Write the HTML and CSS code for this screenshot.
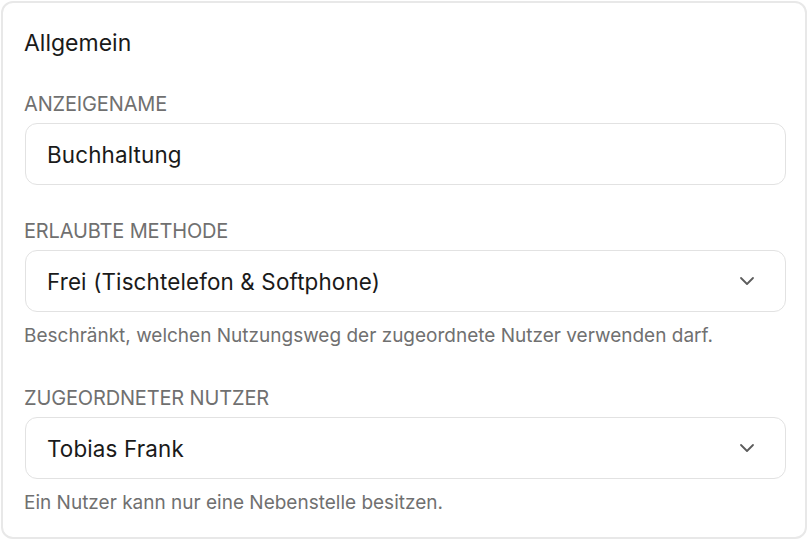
FILE: index.html
```html
<!DOCTYPE html>
<html lang="de">
<head>
<meta charset="utf-8">
<link rel="stylesheet" href="styles.css">
</head>
<body>
<section class="card">
  <h2 class="title">Allgemein</h2>
  <div class="field first">
    <label class="label">ANZEIGENAME</label>
    <div class="control"><span class="value">Buchhaltung</span></div>
  </div>
  <div class="field second">
    <label class="label">ERLAUBTE METHODE</label>
    <div class="control"><span class="value">Frei (Tischtelefon &amp; Softphone)</span>
      <svg class="chev" width="16" height="10" viewBox="0 0 16 10"><path d="M2 2 L8 8 L14 2" fill="none" stroke="#5c5c5c" stroke-width="1.8" stroke-linecap="round" stroke-linejoin="round"/></svg>
    </div>
    <p class="help">Beschränkt, welchen Nutzungsweg der zugeordnete Nutzer verwenden darf.</p>
  </div>
  <div class="field third">
    <label class="label">ZUGEORDNETER NUTZER</label>
    <div class="control"><span class="value">Tobias Frank</span>
      <svg class="chev" width="16" height="10" viewBox="0 0 16 10"><path d="M2 2 L8 8 L14 2" fill="none" stroke="#5c5c5c" stroke-width="1.8" stroke-linecap="round" stroke-linejoin="round"/></svg>
    </div>
    <p class="help">Ein Nutzer kann nur eine Nebenstelle besitzen.</p>
  </div>
</section>
</body>
</html>
```
FILE: styles.css
```css
html, body { margin: 0; padding: 0; background: #ffffff; }
body { padding: 1px; font-family: Inter, "Noto Sans", sans-serif; }
.card {
  box-sizing: border-box;
  width: 806px;
  height: 538px;
  border: 2px solid #e8e8e8;
  border-radius: 12px;
  padding: 26px 19px 0 21px;
  background: #fff;
}
.title {
  margin: 0;
  font-size: 23px;
  font-weight: 400;
  color: #1a1a1a;
  line-height: 28px;
}
.field { display: flex; flex-direction: column; }
.field.first { margin-top: 35px; }
.field.second { margin-top: 34px; }
.field.third { margin-top: 38px; }
.label {
  font-size: 20px;
  color: #707070;
  line-height: 24px;
  margin-bottom: 7px;
  letter-spacing: -0.15px;
}
.control {
  box-sizing: border-box;
  height: 62px;
  margin-left: 1px;
  border: 1.5px solid #e2e2e2;
  border-radius: 12px;
  display: flex;
  align-items: center;
  justify-content: space-between;
  padding: 0 30px 0 21px;
}
.value { font-size: 22.4px; color: #1a1a1a; letter-spacing: 0.15px; }
.help {
  margin: 12px 0 0 0;
  font-size: 19px;
  line-height: 24px;
  color: #707070;
  letter-spacing: 0;
}
```
